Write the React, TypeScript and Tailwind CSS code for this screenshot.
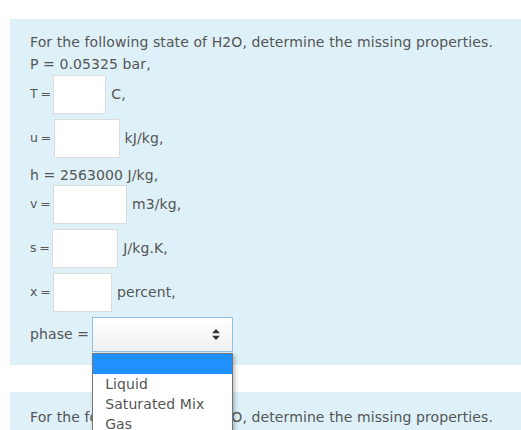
import React from "react";

const rows = [
  { label: "T =", unit: "C,", w: "w-[53px]" },
  { label: "u =", unit: "kJ/kg,", w: "w-[66px]" },
];
const rows2 = [
  { label: "v =", unit: "m3/kg,", w: "w-[74px]" },
  { label: "s =", unit: "J/kg.K,", w: "w-[66px]" },
  { label: "x =", unit: "percent,", w: "w-[59px]" },
];

function Row({ label, unit, w }: { label: string; unit: string; w: string }) {
  return (
    <div className="flex items-center h-[39px] mt-[5px] first:mt-0">
      <span className="text-[12.5px] tracking-[-0.6px]">{label}</span>
      <input
        type="text"
        className={`${w} h-[39px] ml-[3px] mr-[5px] bg-white border border-[#dcdcdc] outline-none`}
      />
      <span>{unit}</span>
    </div>
  );
}

export default function App() {
  return (
    <div
      className="relative h-[430px] overflow-hidden bg-white pt-[19px] pl-[10px] text-[14px] text-[#555] tracking-[0.1px]"
      style={{ fontFamily: '"DejaVu Sans", Verdana, sans-serif' }}
    >
      {/* question 1 */}
      <div className="bg-[#def1f8] pl-5 pt-[12px] pb-[13px]">
        <p className="leading-[22px]">For the following state of H2O, determine the missing properties.</p>
        <p className="leading-[22px]">P = 0.05325 bar,</p>
        <div>
          {rows.map((r) => (
            <Row key={r.label} {...r} />
          ))}
        </div>
        <p className="leading-[20px] mt-[7px]">h = 2563000 J/kg,</p>
        <div>
          {rows2.map((r) => (
            <Row key={r.label} {...r} />
          ))}
        </div>
        <div className="flex items-center mt-[5px]">
          <span>phase =</span>
          <div className="relative ml-[3px]">
            <div className="w-[141px] h-[35px] border border-[#8fc0ea] bg-gradient-to-b from-white to-[#f1f1f1] flex items-center justify-end pr-[12px]">
              <svg width="8" height="11" viewBox="0 0 8 11">
                <path d="M4 0 L8 4.3 H0 Z M0 6.7 H8 L4 11 Z" fill="#333" />
              </svg>
            </div>
            {/* open option list */}
            <ul className="absolute left-0 top-[36px] w-[141px] bg-white border border-[#767676] shadow-[2px_2px_4px_rgba(0,0,0,0.25)] z-10">
              <li className="h-[20px] bg-[#1e90ff]"></li>
              <li className="h-[20px] leading-[20px] pl-[12px]">Liquid</li>
              <li className="h-[20px] leading-[20px] pl-[12px]">Saturated Mix</li>
              <li className="h-[20px] leading-[20px] pl-[12px]">Gas</li>
            </ul>
          </div>
        </div>
      </div>

      {/* question 2 */}
      <div className="bg-[#def1f8] pl-5 pt-[14px] pb-4 mt-[27px]">
        <p className="leading-[22px]">For the following state of H2O, determine the missing properties.</p>
      </div>
    </div>
  );
}
